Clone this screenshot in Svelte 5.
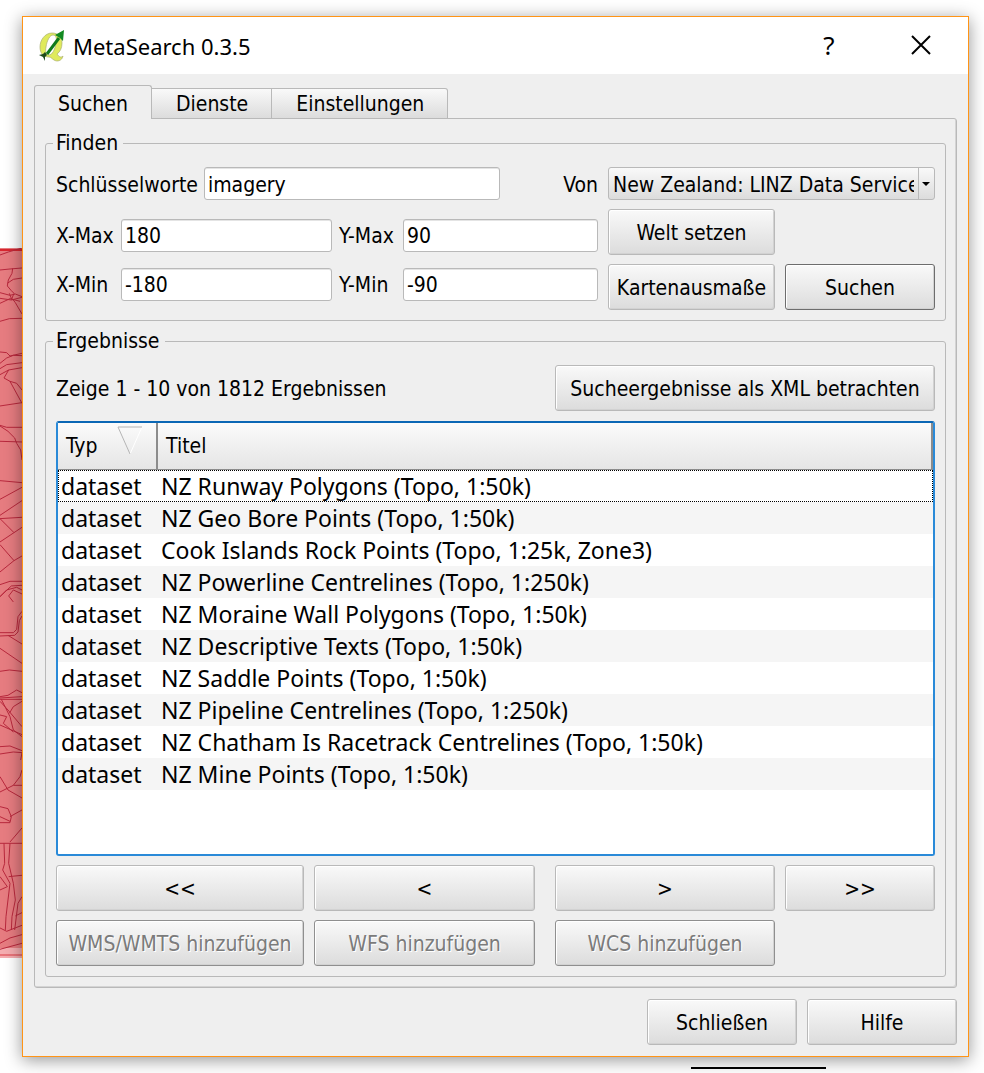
<script>
  const tabs = ['Suchen', 'Dienste', 'Einstellungen'];
  let active = $state(0);
  let keywords = $state('imagery');
  let xmax = $state('180');
  let ymax = $state('90');
  let xmin = $state('-180');
  let ymin = $state('-90');
  let selected = $state(0);

  const results = [
    'NZ Runway Polygons (Topo, 1:50k)',
    'NZ Geo Bore Points (Topo, 1:50k)',
    'Cook Islands Rock Points (Topo, 1:25k, Zone3)',
    'NZ Powerline Centrelines (Topo, 1:250k)',
    'NZ Moraine Wall Polygons (Topo, 1:50k)',
    'NZ Descriptive Texts (Topo, 1:50k)',
    'NZ Saddle Points (Topo, 1:50k)',
    'NZ Pipeline Centrelines (Topo, 1:250k)',
    'NZ Chatham Is Racetrack Centrelines (Topo, 1:50k)',
    'NZ Mine Points (Topo, 1:50k)'
  ];
</script>

<div class="desktop">
  <svg class="map" viewBox="0 0 22 710" width="22" height="710" aria-hidden="true">
    <rect width="22" height="710" fill="#e67c80" />
    <rect y="700" width="22" height="10" fill="#f5adb0" />
    <rect y="1" width="22" height="2" fill="#d8262f" />
    <rect y="706" width="22" height="2" fill="#e8747a" />
    <g fill="none" stroke="#b8283c" stroke-width="3">
      <g transform="translate(0 -18) scale(.3333)">
        <path d="M0 75L25 66L66 54M0 120L30 117L66 114M38 115L36 130L25 150L22 168L34 182L42 190L36 205L46 218L66 252M66 144L40 148L22 160M0 188L30 196L46 192L66 200M0 205L34 210L66 202M0 220L30 206L60 214M28 190L36 210M0 274L28 266L66 265" />
        <path d="M0 366L20 368L30 378L66 370M0 400L20 384L40 376L66 377M0 416L20 404L66 398M0 434L26 420L66 413M26 420L12 444L30 454L66 520M30 454L50 460L66 480M0 528L66 518M0 586L20 592L66 592M0 588L24 604L44 624L50 640L62 660L66 690M0 634L66 636M0 752L66 758M0 808L66 772M0 856L66 812M0 866L66 862M0 866L42 908L66 892M0 936L42 908M0 944L42 992L66 978M0 1026L42 992M0 1064L30 1054L66 1054M0 1100L34 1068L66 1066M0 1100L20 1080L50 1072L66 1080M66 1092L40 1080L26 1098L40 1116" />
      </g>
      <g transform="translate(0 352) scale(.3333)">
        <path d="M66 34L54 50L50 88L40 98L0 98M66 48L58 62L54 96L44 106L0 108M24 106L66 132M0 145L66 190M0 214L28 210L66 214M0 294L66 290M0 298L66 298M0 290L24 286L50 270L66 278M4 298L30 350L40 390L66 410M0 304L24 330L66 380M66 304L40 320L28 340M0 345L20 350L10 370L40 396M0 375L66 404M0 440L30 438L66 452M0 462L40 456L66 458L62 480M66 510L60 530L40 556L0 576M0 530L24 570L66 594M40 556L66 556M0 620L24 626L34 650L30 668L0 668M0 650L30 664M30 650L66 630M66 684L30 726M0 730L66 730M12 730L14 790L8 810L30 850L24 900L18 950L16 990M30 730L26 790L40 850L46 900L36 950L34 990M0 830L22 860L0 870M26 830L66 826M66 890L54 910L44 990M66 938L46 948M0 984L20 994L66 976M0 1030L30 1014L66 1004M0 1048L66 1030" />
      </g>
    </g>
  </svg>

  <main class="window">
    <header class="titlebar">
      <svg class="logo" viewBox="0 0 26 32" width="26" height="32" aria-hidden="true">
        <path
          d="M13 3C6 3 1 10 1 17C1 23 4 27 10 27C12 27 13 29 15 30C18 32 23 31 24 26C22 28 20 27 18 24C21 22 23 18 23 13C23 7 19 3 13 3ZM14 5C17 5 18 8 17 13C16 20 13 25 10 25C7 25 6 22 7 17C8 10 11 5 14 5Z"
          fill="#dfea5c"
          fill-rule="evenodd"
          stroke="#a9ad72"
          stroke-width=".7"
        />
        <path d="M8 24L20 8" stroke="#0f7a1c" stroke-width="3" />
        <path d="M16 5L25 0L24 11L21 8Z" fill="#138a22" />
        <path d="M0 25L4 24L6 22L8 25L6 27V31L4 27Z" fill="#1d4a1c" />
      </svg>
      <h1>MetaSearch 0.3.5</h1>
      <button class="caption help" aria-label="Hilfe">?</button>
      <button class="caption" aria-label="Schließen">
        <svg viewBox="0 0 20 20" width="20" height="20" aria-hidden="true"><path d="M1 1L19 19M19 1L1 19" stroke="#000" stroke-width="2" /></svg>
      </button>
    </header>

    <div class="body">
      <div class="tabs" role="tablist">
        {#each tabs as tab, i}
          <button class="tab" class:active={active === i} role="tab" aria-selected={active === i} onclick={() => (active = i)}>{tab}</button>
        {/each}
      </div>

      <section class="panel">
        <fieldset>
          <legend>Finden</legend>
          <div class="row keywords">
            <label for="kw">Schlüsselworte</label>
            <input id="kw" type="text" bind:value={keywords} />
            <label class="from" for="catalog">Von</label>
            <div class="combo">
              <select id="catalog">
                <option>New Zealand: LINZ Data Service</option>
              </select>
            </div>
          </div>
          <div class="row extents">
            <div class="bounds">
              <label for="xmax">X-Max</label>
              <input id="xmax" type="text" bind:value={xmax} />
              <label for="ymax">Y-Max</label>
              <input id="ymax" type="text" bind:value={ymax} />
              <label for="xmin">X-Min</label>
              <input id="xmin" type="text" bind:value={xmin} />
              <label for="ymin">Y-Min</label>
              <input id="ymin" type="text" bind:value={ymin} />
            </div>
            <div class="actions">
              <button class="btn">Welt setzen</button>
              <button class="btn extent">Kartenausmaße</button>
              <button class="btn default">Suchen</button>
            </div>
          </div>
        </fieldset>

        <fieldset class="results">
          <legend>Ergebnisse</legend>
          <div class="content">
            <div class="summary">
              <span>Zeige 1 - 10 von 1812 Ergebnissen</span>
              <button class="btn xml">Sucheergebnisse als XML betrachten</button>
            </div>
            <div class="list">
              <table>
                <thead>
                  <tr>
                    <th class="type">
                      <div class="head">
                        Typ
                        <svg viewBox="0 0 26 28" width="26" height="28" aria-hidden="true">
                          <path d="M25 1L13 28" stroke="#fff" fill="none" />
                          <path d="M13 28L1 1H25" stroke="#b4b4b4" fill="none" />
                        </svg>
                      </div>
                    </th>
                    <th><div class="head">Titel</div></th>
                  </tr>
                </thead>
                <tbody>
                  {#each results as title, i}
                    <tr class:selected={selected === i} onclick={() => (selected = i)}>
                      <td>dataset</td>
                      <td>{title}</td>
                    </tr>
                  {/each}
                </tbody>
              </table>
            </div>
            <div class="pager">
              <button class="btn">&lt;&lt;</button>
              <button class="btn">&lt;</button>
              <button class="btn third">&gt;</button>
              <button class="btn">&gt;&gt;</button>
              <button class="btn" disabled>WMS/WMTS hinzufügen</button>
              <button class="btn" disabled>WFS hinzufügen</button>
              <button class="btn third" disabled>WCS hinzufügen</button>
            </div>
          </div>
        </fieldset>
      </section>

      <footer>
        <button class="btn">Schließen</button>
        <button class="btn">Hilfe</button>
      </footer>
    </div>
  </main>
  <div class="rule"></div>
</div>

<style>
  :global(body) {
    margin: 0;
    background: #fff;
  }
  .desktop,
  .desktop * {
    box-sizing: border-box;
  }
  .desktop {
    position: relative;
    display: flex;
    flex-direction: column;
    min-height: 100vh;
    padding: 16px 15px 4px 22px;
    overflow: hidden;
    font-family: 'DejaVu Sans Condensed', 'DejaVu Sans', sans-serif;
    font-size: 21px;
    line-height: 24px;
    color: #000;
  }
  .map {
    position: absolute;
    left: 0;
    top: 248px;
  }
  .window {
    position: relative;
    flex: 1;
    display: flex;
    flex-direction: column;
    border: 1px solid #ff9416;
    background: #efefef;
    box-shadow: 0 3px 16px rgba(0, 0, 0, 0.42);
  }
  .rule {
    position: relative;
    width: 135px;
    height: 2px;
    margin: 10px 143px 0 auto;
    background: #000;
  }
  button,
  input,
  select {
    font: inherit;
    color: inherit;
  }

  .titlebar {
    display: flex;
    align-items: center;
    height: 57px;
    padding-left: 16px;
    background: #fff;
    font-family: 'Noto Sans', sans-serif;
  }
  .logo {
    margin-right: 8px;
  }
  h1 {
    flex: 1;
    margin: 0;
    font-size: 22px;
    font-weight: 400;
  }
  .caption {
    display: grid;
    place-items: center;
    width: 92px;
    height: 57px;
    padding: 0 2px 2px 0;
    border: 0;
    background: none;
  }
  .help {
    font-size: 26px;
  }

  .body {
    flex: 1;
    display: flex;
    flex-direction: column;
    padding: 11px;
  }
  .tabs {
    display: flex;
    align-items: flex-end;
  }
  .tab {
    height: 31px;
    padding: 1px 23px 0 24px;
    border: 1px solid #b9b9b9;
    border-left-width: 0;
    background: linear-gradient(#f9f9f9, #dcdcdc);
  }
  .tab:last-child {
    border-top-right-radius: 3px;
  }
  .tab.active {
    position: relative;
    height: 34px;
    padding: 2px 23px 0;
    border-width: 1px 1px 0;
    border-radius: 3px 3px 0 0;
    background: #efefef;
  }
  .panel {
    flex: 1;
    display: flex;
    flex-direction: column;
    gap: 8px;
    margin-top: -1px;
    padding: 12px 10px 10px;
    border: 1px solid #b9b9b9;
    border-radius: 0 3px 3px 3px;
    box-shadow: inset -1px -1px #d4d4d4;
  }
  fieldset {
    min-width: 0;
    margin: 0;
    padding: 12px 10px 10px;
    border: 1px solid #b9b9b9;
    border-radius: 3px;
  }
  legend {
    margin-left: -3px;
    padding: 0 5px 0 3px;
  }

  input,
  select,
  .btn {
    margin: 0;
    border: 1px solid #b9b9b9;
    border-radius: 3px;
  }
  input {
    min-width: 0;
    height: 33px;
    padding: 2px 3px 0;
    background: #fff;
    box-shadow: inset 0 1px #e4e4e4;
  }
  label,
  .summary span {
    padding-top: 2px;
  }
  .row {
    display: flex;
    align-items: center;
  }
  .keywords input {
    width: 296px;
    margin-left: 6px;
  }
  .from {
    margin-left: auto;
  }
  .combo {
    position: relative;
    width: 327px;
    margin-left: 10px;
  }
  .combo::before {
    content: '';
    position: absolute;
    top: 1px;
    bottom: 1px;
    right: 16px;
    border-left: 1px solid #b9b9b9;
    pointer-events: none;
  }
  .combo::after {
    content: '';
    position: absolute;
    top: 15px;
    right: 5px;
    border: 4px solid transparent;
    border-top-color: #000;
    border-bottom: 0;
    pointer-events: none;
  }
  select {
    display: block;
    width: 100%;
    height: 33px;
    padding: 2px 20px 0 4px;
    appearance: none;
    background: linear-gradient(#f9f9f9, #dcdcdc);
  }
  .extents {
    gap: 10px;
    margin-top: 9px;
  }
  .bounds {
    flex: 1;
    display: grid;
    grid-template-columns: 58px 211fr 57px 195fr;
    column-gap: 7px;
    row-gap: 16px;
    align-items: center;
  }
  .actions {
    display: grid;
    grid-template-columns: 167px 150px;
    gap: 9px 10px;
  }
  .extent {
    grid-column: 1;
  }
  .btn {
    height: 46px;
    padding: 2px 6px 0;
    background: linear-gradient(#f9f9f9, #dcdcdc);
    box-shadow: inset 1px 1px #fff, inset -1px -1px #d2d2d2;
    white-space: nowrap;
  }
  .btn.default {
    border-color: #6d6d6d;
  }
  .btn:disabled {
    border-color: #8f8f8f;
    color: #7b7b7b;
    text-shadow: 1px 1px #fff;
  }

  .results {
    flex: 1;
  }
  .content {
    display: flex;
    flex-direction: column;
    gap: 10px;
  }
  .pager {
    margin-top: -1px;
  }
  .summary {
    display: flex;
    align-items: center;
    justify-content: space-between;
  }
  .xml {
    width: 380px;
  }
  .list {
    min-height: 435px;
    border: 2px solid #2a8ad8;
    border-top-color: #0b67b5;
    border-radius: 3px;
    background: #fff;
  }
  table {
    width: 100%;
    border-collapse: separate;
    border-spacing: 0;
    table-layout: fixed;
  }
  th {
    height: 47px;
    padding: 0 8px;
    border-right: 2px solid #8c8c8c;
    border-bottom: 1px solid #8c8c8c;
    background: linear-gradient(#fbfbfb, #e5e5e5);
    font-weight: 400;
    text-align: left;
  }
  .type {
    width: 100px;
  }
  .head {
    display: flex;
    gap: 20px;
  }
  .type .head {
    margin-right: -8px;
  }
  .head svg {
    flex: none;
    margin: -8px 0;
  }
  td {
    height: 32px;
    padding: 1px 3px 0;
    font-family: 'Noto Sans', sans-serif;
    font-size: 23px;
    line-height: 31px;
    white-space: nowrap;
  }
  tbody tr:nth-child(even) {
    background: #f5f5f5;
  }
  .selected {
    outline: 1px dotted #000;
    outline-offset: -1px;
  }
  .pager {
    display: grid;
    grid-template-columns: 248fr 221fr 230fr 150fr;
    gap: 9px 10px;
  }
  .third {
    margin-left: 10px;
  }
  footer {
    display: grid;
    grid-template-columns: 150px 150px;
    justify-content: end;
    gap: 10px;
    margin-top: 11px;
  }
</style>
